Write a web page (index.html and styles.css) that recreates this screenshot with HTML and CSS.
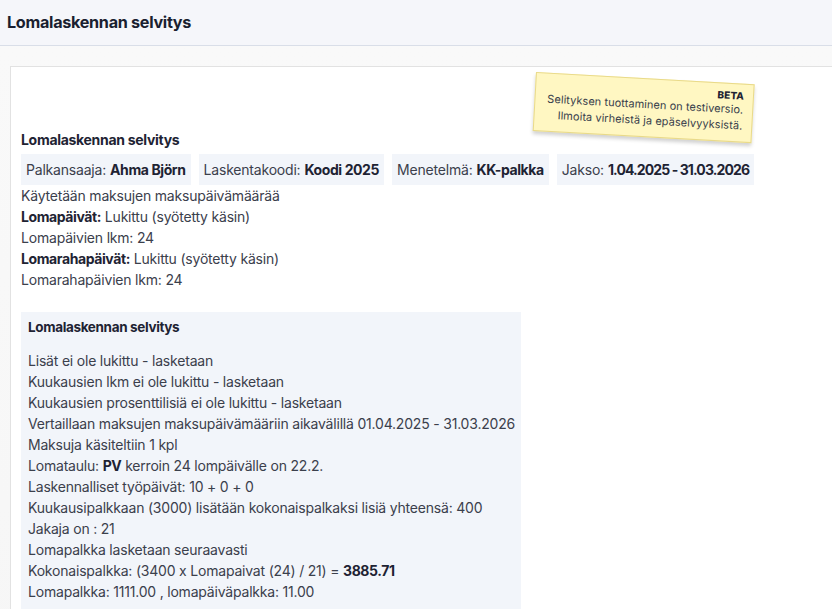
FILE: index.html
```html
<!DOCTYPE html>
<html lang="fi">
<head>
<meta charset="utf-8">
<title>Lomalaskennan selvitys</title>
<link rel="stylesheet" href="styles.css">
</head>
<body>
<header class="topbar">
  <h1 class="page-title">Lomalaskennan selvitys</h1>
</header>
<main class="stage">
  <section class="card">
    <div class="beta-note">
      <div class="beta-tag">BETA</div>
      <div>Selityksen tuottaminen on testiversio.</div>
      <div>Ilmoita virheistä ja epäselvyyksistä.</div>
    </div>
    <h2 class="section-title">Lomalaskennan selvitys</h2>
    <div class="chips">
      <span class="chip">Palkansaaja: <b>Ahma Björn</b></span>
      <span class="chip">Laskentakoodi: <b>Koodi 2025</b></span>
      <span class="chip">Menetelmä: <b>KK-palkka</b></span>
      <span class="chip">Jakso: <b class="date">1.04.2025 - 31.03.2026</b></span>
    </div>
    <div class="lines">
      <div>Käytetään maksujen maksupäivämäärää</div>
      <div><b>Lomapäivät:</b> Lukittu (syötetty käsin)</div>
      <div>Lomapäivien lkm: 24</div>
      <div><b>Lomarahapäivät:</b> Lukittu (syötetty käsin)</div>
      <div>Lomarahapäivien lkm: 24</div>
    </div>
    <div class="detail-box">
      <h3 class="box-title">Lomalaskennan selvitys</h3>
      <div class="lines">
        <div>Lisät ei ole lukittu - lasketaan</div>
        <div>Kuukausien lkm ei ole lukittu - lasketaan</div>
        <div>Kuukausien prosenttilisiä ei ole lukittu - lasketaan</div>
        <div>Vertaillaan maksujen maksupäivämääriin aikavälillä 01.04.2025 - 31.03.2026</div>
        <div>Maksuja käsiteltiin 1 kpl</div>
        <div>Lomataulu: <b>PV</b> kerroin 24 lompäivälle on 22.2.</div>
        <div>Laskennalliset työpäivät: 10 + 0 + 0</div>
        <div>Kuukausipalkkaan (3000) lisätään kokonaispalkaksi lisiä yhteensä: 400</div>
        <div>Jakaja on : 21</div>
        <div>Lomapalkka lasketaan seuraavasti</div>
        <div>Kokonaispalkka: (3400 x Lomapaivat (24) / 21) = <b>3885.71</b></div>
        <div>Lomapalkka: 1111.00 , lomapäiväpalkka: 11.00</div>
      </div>
    </div>
  </section>
</main>
</body>
</html>
```

FILE: styles.css
```css
html, body {
  margin: 0;
  padding: 0;
  background: #f7f7f8;
  font-family: Inter, "Noto Sans", sans-serif;
  color: #3b404c;
  overflow: hidden;
  height: 609px;
}

b { color: #1e2333; font-weight: 700; letter-spacing: -0.4px; }

b.date { letter-spacing: -0.9px; }

.topbar {
  height: 45px;
  background: #f5f6fa;
  border-bottom: 1px solid #d9dee8;
  display: flex;
  align-items: center;
  padding-left: 7px;
}

.page-title {
  margin: 0;
  font-size: 16.2px;
  font-weight: 700;
  color: #1a1f30;
  letter-spacing: -0.3px;
  padding-bottom: 2px;
}

.stage {
  padding: 20px 0 0 10px;
  background: linear-gradient(#f9f9f9, #f6f6f6);
}

.card {
  position: relative;
  background: #fff;
  border-top: 1px solid #e2e2e2;
  border-left: 1px solid #e2e2e2;
  padding: 63px 0 0 10px;
  min-height: 600px;
}

.beta-note {
  position: absolute;
  left: 525px;
  top: 5px;
  width: 202px;
  padding: 6px 9px 8px 6px;
  background: #fff7c2;
  border: 1px solid #e9da8a;
  box-shadow: 0 3px 4px rgba(0,0,0,0.18);
  transform: rotate(3.2deg);
  transform-origin: top left;
  text-align: right;
  font-size: 11px;
  line-height: 16px;
  letter-spacing: 0.05px;
  color: #3a3f4c;
}

.beta-tag {
  font-weight: 800;
  font-size: 10px;
  line-height: 11px;
  color: #1e2333;
}

.section-title {
  margin: 0 0 4px 0;
  font-size: 14px;
  font-weight: 700;
  color: #1e2333;
  letter-spacing: -0.3px;
  line-height: 20px;
}

.chips {
  display: flex;
  gap: 8px;
}

.chip {
  background: #f2f5fa;
  padding: 0 5px;
  height: 31px;
  display: flex;
  align-items: center;
  gap: 4px;
  font-size: 14px;
  letter-spacing: -0.2px;
  white-space: nowrap;
}

.lines {
  font-size: 14px;
  line-height: 21px;
  letter-spacing: -0.2px;
}

.detail-box {
  margin-top: 22px;
  width: 486px;
  background: #f2f5fa;
  padding: 6px 7px 20px 7px;
}

.detail-box .lines div {
  white-space: nowrap;
}

.box-title {
  margin: 0 0 14px 0;
  font-size: 13.5px;
  font-weight: 700;
  color: #1e2333;
  letter-spacing: -0.35px;
  line-height: 18px;
}
```
